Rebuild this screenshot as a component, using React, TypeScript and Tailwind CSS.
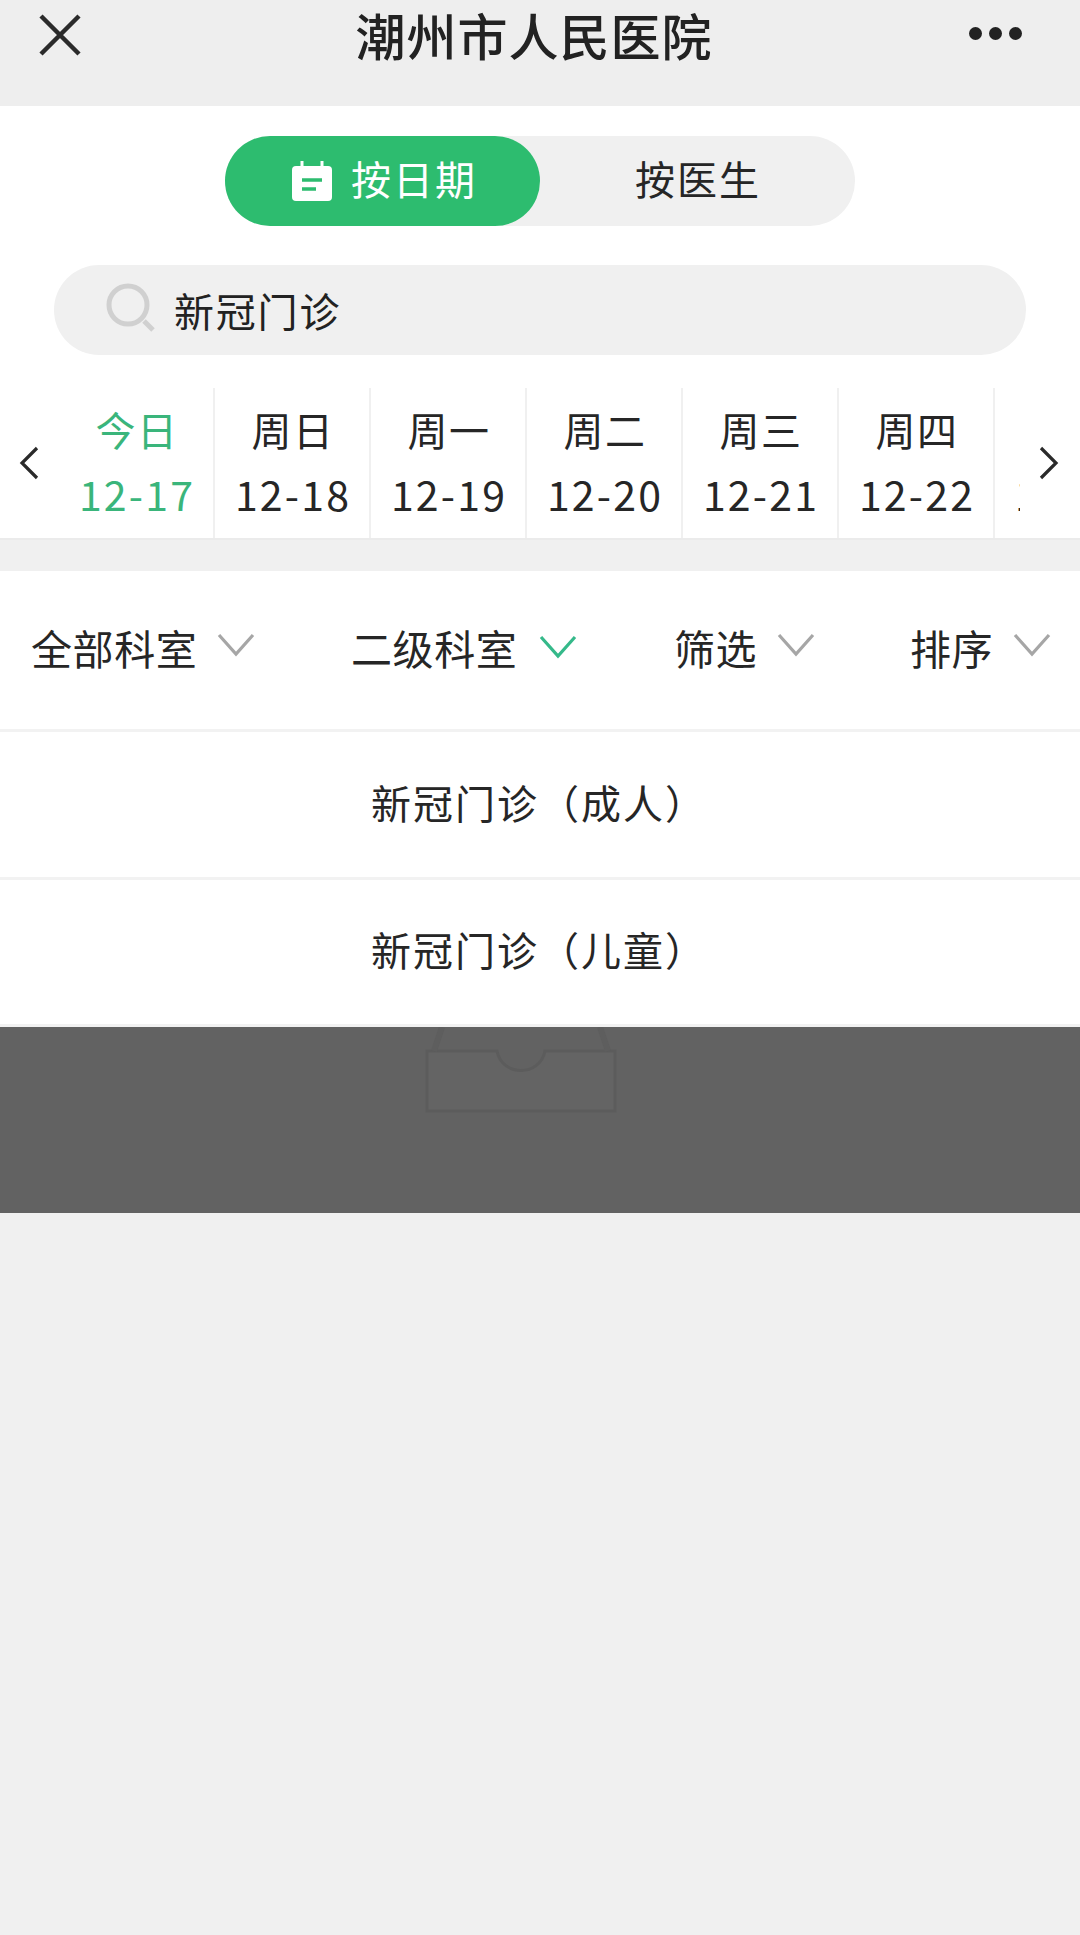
const F = "font-['Noto_Sans_CJK_SC','Noto_Sans',sans-serif]";

const days = [
  ["今日", "12-17"],
  ["周日", "12-18"],
  ["周一", "12-19"],
  ["周二", "12-20"],
  ["周三", "12-21"],
  ["周四", "12-22"],
  ["周五", "12-23"],
];

const filters = [
  { label: "全部科室", width: "w-[320px]", active: false },
  { label: "二级科室", width: "w-[323px]", active: true },
  { label: "筛选", width: "w-[236px]", active: false },
  { label: "排序", width: "w-[160px]", active: false },
];

function Chevron({ active }: { active: boolean }) {
  return (
    <svg
      width="38"
      height="24"
      viewBox="0 0 38 24"
      fill="none"
      className={`shrink-0 ${active ? "ml-[22px] mb-[6px]" : "ml-[20px] mb-[10px]"}`}
    >
      <path d="M2 2 L19 21 L36 2" stroke={active ? "#35b98a" : "#a6a6a6"} strokeWidth="3.2" />
    </svg>
  );
}

function Row({ text, height }: { text: string; height: string }) {
  return (
    <div className={`${height} bg-white border-b-[3px] border-[#f2f2f2] flex items-center justify-center pr-[2px] pb-[6px] text-[40px] tracking-[2px] text-[#262626] leading-none`}>
      {text}
    </div>
  );
}

export default function App() {
  return (
    <div className={`${F} w-[1080px] h-[1935px] bg-[#f0f0f0] overflow-hidden text-[#222222]`}>
      <header className="h-[106px] bg-[#eeeeee] flex items-start justify-between pl-[38px] pr-[58px]">
        <svg width="44" height="44" viewBox="0 0 44 44" fill="none" className="mt-[13px]">
          <path d="M3 3 L41 41 M41 3 L3 41" stroke="#2a2a2a" strokeWidth="4.5" />
        </svg>
        <h1 className="text-[50px] leading-[68px] font-medium pl-[17px] tracking-[1px]">潮州市人民医院</h1>
        <div className="flex gap-[7px] mt-[27px]">
          <span className="w-[13px] h-[13px] rounded-full bg-[#222222]" />
          <span className="w-[13px] h-[13px] rounded-full bg-[#222222]" />
          <span className="w-[13px] h-[13px] rounded-full bg-[#222222]" />
        </div>
      </header>

      <section className="bg-white pt-[30px]">
        <div className="ml-[225px] w-[630px] h-[90px] rounded-full bg-[#f0f0f0] flex text-[40px] leading-none">
          <div className="w-[315px] h-full rounded-full bg-[#2dbc6f] text-white flex items-center pl-[67px]">
            <svg width="40" height="40" viewBox="0 0 40 40" className="shrink-0">
              <rect x="0" y="5" width="40" height="35" rx="4" fill="#ffffff" />
              <path d="M10 0 V8 M30 0 V8" stroke="#ffffff" strokeWidth="3" />
              <path d="M10 19 H30 M10 28 H24" stroke="#2dbc6f" strokeWidth="3.5" />
            </svg>
            <span className="ml-[19px] tracking-[2px] mb-[6px]">按日期</span>
          </div>
          <div className="flex-1 flex items-center pl-[95px] tracking-[2px] text-[#262626] pb-[6px]">按医生</div>
        </div>

        <div className="mt-[39px] ml-[54px] w-[972px] h-[90px] rounded-full bg-[#f0f0f0] flex items-center pl-[52px] text-[40px] leading-none">
          <svg width="50" height="50" viewBox="0 0 50 50" fill="none" className="shrink-0 mb-[4px]">
            <circle cx="22" cy="22" r="19" stroke="#d0d0d0" strokeWidth="5" />
            <path d="M38 38 L47 47" stroke="#d0d0d0" strokeWidth="5" />
          </svg>
          <span className="ml-[18px] tracking-[1.8px] text-[#222222]">新冠门诊</span>
        </div>

        <div className="relative mt-[33px] h-[150px] flex overflow-hidden">
          <div className="w-[59px] shrink-0 flex items-center pl-[18px]">
            <svg width="22" height="34" viewBox="0 0 22 34" fill="none">
              <path d="M19 2 L4 17 L19 32" stroke="#2a2a2a" strokeWidth="3.2" />
            </svg>
          </div>
          {days.map(([w, d], i) => (
            <div
              key={d}
              className={`w-[156px] h-full shrink-0 border-r-[2px] border-[#f0f0f0] flex flex-col items-center pl-[2px] ${
                i === 0 ? "text-[#3ab57b]" : "text-[#262626]"
              }`}
            >
              <span className="text-[40px] leading-none mt-[21px] tracking-[1.5px]">{w}</span>
              <span className="text-[41px] leading-none mt-[24px] tracking-[2.2px]">{d}</span>
            </div>
          ))}
          <div className="absolute right-0 top-0 bottom-0 w-[60px] bg-white flex items-center pl-[18px]">
            <svg width="22" height="34" viewBox="0 0 22 34" fill="none">
              <path d="M3 2 L18 17 L3 32" stroke="#2a2a2a" strokeWidth="3.2" />
            </svg>
          </div>
        </div>
      </section>

      <div className="h-[33px] bg-[#f0f0f0] border-t-[2px] border-[#ebebeb]" />

      <div className="h-[161px] bg-white border-b-[3px] border-[#f2f2f2] flex items-center pl-[31px] text-[41px] tracking-[0.6px] leading-none text-[#262626]">
        {filters.map((f) => (
          <div key={f.label} className={`${f.width} shrink-0 flex items-center`}>
            <span className="mb-[5px]">{f.label}</span>
            <Chevron active={f.active} />
          </div>
        ))}
      </div>

      <Row text="新冠门诊（成人）" height="h-[148px]" />
      <Row text="新冠门诊（儿童）" height="h-[147px]" />

      <div className="h-[186px] bg-[#626262] flex justify-center pr-[38px]">
        <svg width="194" height="90" viewBox="0 0 194 90" fill="none">
          <path d="M3 24 H73 C78 50 116 50 121 24 H191 V84 H3 Z" stroke="#5c5c5c" strokeWidth="3" fill="#646464" />
          <path d="M18 0 L10 24 M176 0 L184 24" stroke="#5e5e5e" strokeWidth="6" />
        </svg>
      </div>
    </div>
  );
}
